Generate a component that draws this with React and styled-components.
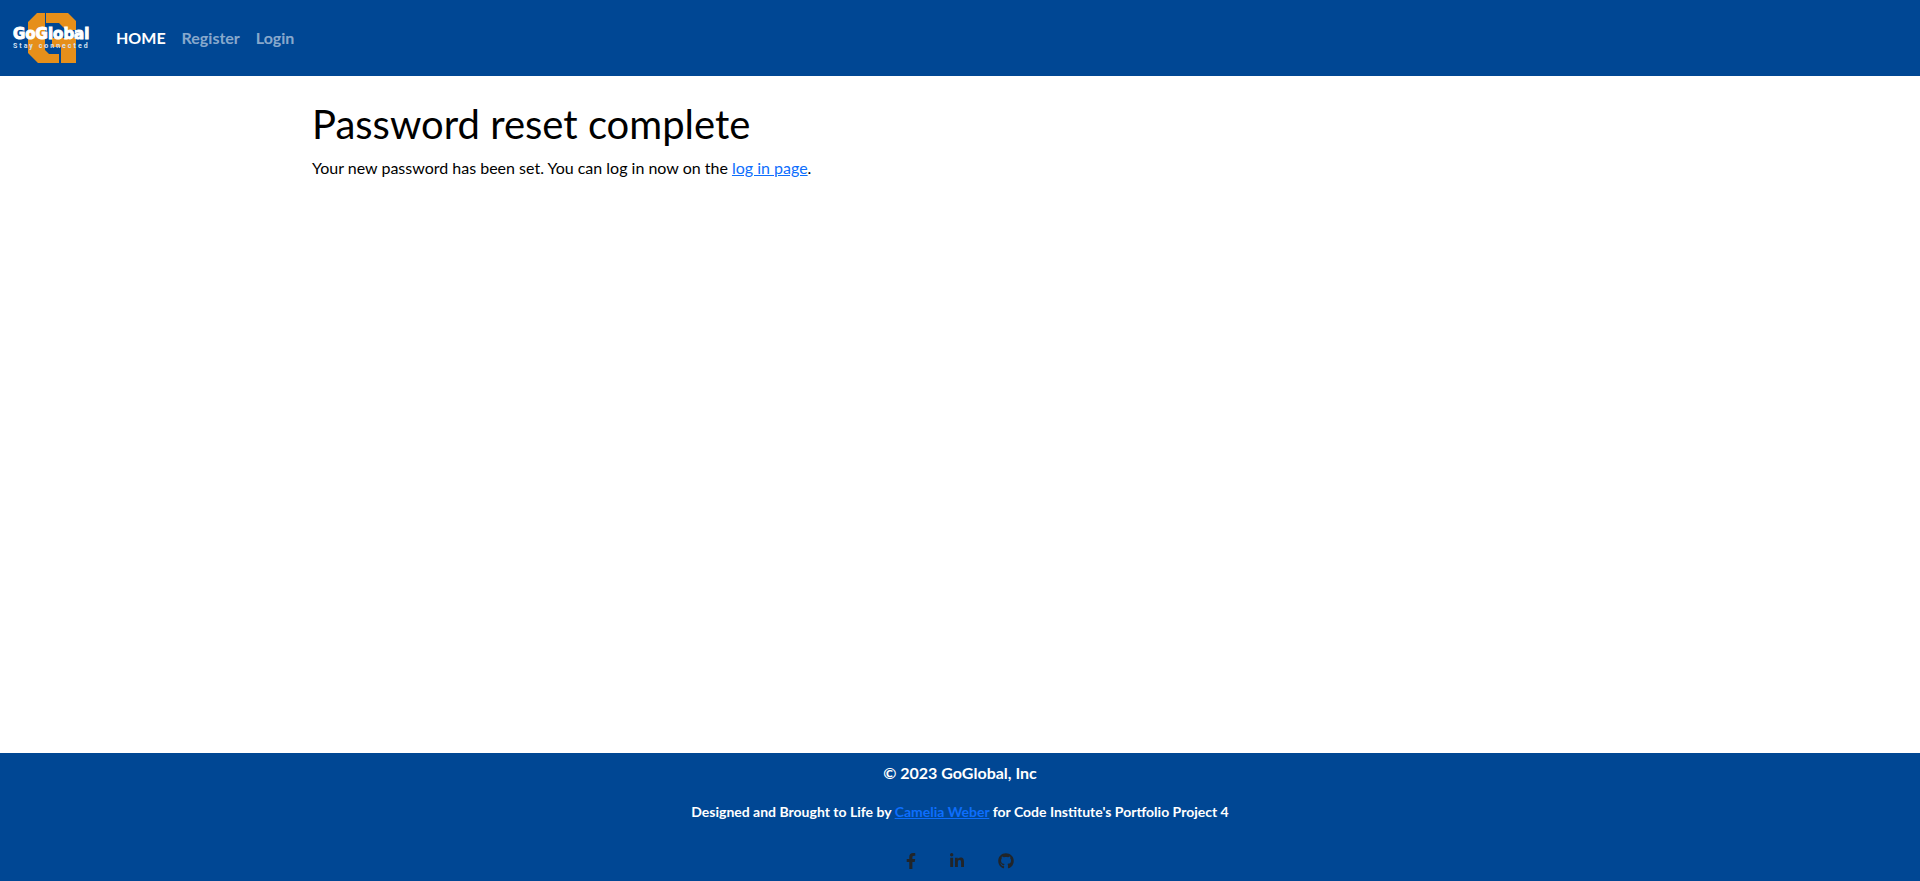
import React from "react";
import styled, { createGlobalStyle } from "styled-components";
import { FaFacebookF, FaLinkedinIn, FaGithub } from "react-icons/fa";

const GlobalStyle = createGlobalStyle`
  *, *::before, *::after { box-sizing: border-box; }
  body {
    margin: 0;
    background: #fff;
    color: #000;
    font: 400 16px/24px Lato, sans-serif;
  }
`;

const Page = styled.div`
  min-height: 100vh;
  display: flex;
  flex-direction: column;
`;

const Navbar = styled.header`
  display: flex;
  align-items: center;
  padding: 8px 12px;
  background: #004794;
`;

const Brand = styled.a`
  display: block;
  margin-right: 16px;
  line-height: 0;
`;

const Logo = styled.svg`
  width: 80px;
  height: 60px;
`;

const NavLinks = styled.nav`
  display: flex;
`;

const NavLink = styled.a`
  padding: 8px;
  font-weight: 700;
  text-decoration: none;
  color: ${({ $active }) => ($active ? "#fff" : "rgba(255, 255, 255, 0.55)")};
`;

const Main = styled.main`
  flex: 1;
  width: 100%;
  max-width: 1320px;
  margin: 0 auto;
  padding: 24px 12px;
`;

const Title = styled.h1`
  margin: 0 0 8px;
  font-size: 40px;
  font-weight: 400;
  line-height: 48px;
`;

const Paragraph = styled.p`
  margin: 0;
`;

const TextLink = styled.a`
  color: #0d6efd;
  text-decoration: underline;
`;

const Footer = styled.footer`
  display: flex;
  flex-direction: column;
  align-items: center;
  padding-top: 8px;
  background: #004794;
  color: #fff;
  font-weight: 700;
  text-align: center;
`;

const Copyright = styled.p`
  margin: 0 0 16px;
`;

const Credits = styled.p`
  margin: 0 0 16px;
  font-size: 14px;
  line-height: 22px;
`;

const SocialLinks = styled.div`
  display: flex;
  gap: 8px;
  padding: 3px 0 1px;
`;

const SocialLink = styled.a`
  display: flex;
  padding: 11px 13px;
  color: #212529;

  svg {
    flex: none;
    width: ${({ $iconWidth }) => $iconWidth}px;
    height: 16px;
  }
`;

const socials = [
  { label: "Facebook", Icon: FaFacebookF, width: 10 },
  { label: "LinkedIn", Icon: FaLinkedinIn, width: 14 },
  { label: "GitHub", Icon: FaGithub, width: 16 },
];

function GoGlobalLogo() {
  return (
    <Logo viewBox="12 8 80 60" role="img" aria-label="GoGlobal">
      <g fill="#e68f1a">
        <path d="M37 13H45V50L49 54H59V63H38L28 53V22Z" />
        <path d="M46 13H68L76 21V30H66L59 23H46Z" />
        <path d="M52 38H76V63H61V47H52Z" />
      </g>
      <text
        x="13" y="39" fill="#fff" stroke="#fff" strokeWidth="1"
        fontFamily="DejaVu Sans, sans-serif" fontSize="15" fontWeight="700"
      >
        GoGlobal
      </text>
      <text
        x="13" y="48" fill="#d5e2f2"
        fontFamily="Roboto, sans-serif" fontSize="7" fontWeight="700" letterSpacing="2"
      >
        Stay connected
      </text>
    </Logo>
  );
}

export default function App() {
  return (
    <Page>
      <GlobalStyle />
      <Navbar>
        <Brand href="#home"><GoGlobalLogo /></Brand>
        <NavLinks aria-label="Main">
          <NavLink href="#home" $active aria-current="page">HOME</NavLink>
          <NavLink href="#register">Register</NavLink>
          <NavLink href="#login">Login</NavLink>
        </NavLinks>
      </Navbar>
      <Main>
        <Title>Password reset complete</Title>
        <Paragraph>
          Your new password has been set. You can log in now on the{" "}
          <TextLink href="#login">log in page</TextLink>.
        </Paragraph>
      </Main>
      <Footer>
        <Copyright>© 2023 GoGlobal, Inc</Copyright>
        <Credits>
          Designed and Brought to Life by <TextLink href="#camelia-weber">Camelia Weber</TextLink> for
          Code Institute's Portfolio Project 4
        </Credits>
        <SocialLinks>
          {socials.map(({ label, Icon, width }) => (
            <SocialLink key={label} href={`#${label.toLowerCase()}`} aria-label={label} $iconWidth={width}>
              <Icon />
            </SocialLink>
          ))}
        </SocialLinks>
      </Footer>
    </Page>
  );
}
